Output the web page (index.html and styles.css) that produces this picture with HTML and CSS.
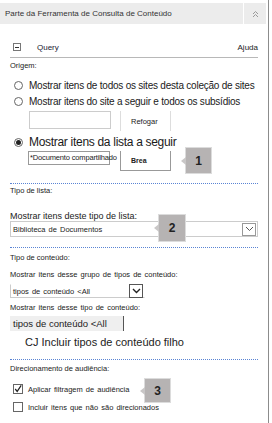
FILE: index.html
```html
<!DOCTYPE html>
<html lang="pt">
<head>
<meta charset="utf-8">
<link rel="stylesheet" href="styles.css">
</head>
<body>
<div class="panel">
  <div class="header">
    <div class="header-title">Parte da Ferramenta de Consulta de Conteúdo</div>
    <div class="header-toggle">
      <svg width="7" height="8" viewBox="0 0 7 8"><path d="M1 4 L3.5 1.5 L6 4 M1 7 L3.5 4.5 L6 7" fill="none" stroke="#9a9a9a" stroke-width="1"/></svg>
    </div>
  </div>

  <div class="content">
    <div class="query-row">
      <span class="collapse-box"><span class="minus"></span></span>
      <span class="query-label">Query</span>
      <span class="help">Ajuda</span>
    </div>

    <div class="section">
      <div class="section-title t1">Origem:</div>
      <label class="radio-row big first"><span class="radio"></span>Mostrar itens de todos os sites desta coleção de sites</label>
      <label class="radio-row big"><span class="radio"></span>Mostrar itens do site a seguir e todos os subsídios</label>
      <div class="input-row">
        <span class="text-input"></span>
        <span class="button">Refogar</span>
      </div>
      <label class="radio-row bigger"><span class="radio checked"></span>Mostrar itens da lista a seguir</label>
      <div class="input-row list-row">
        <span class="text-input small-input">*Documento compartilhado</span>
        <span class="button browse">Brea</span>
        <span class="badge badge-1">1</span>
      </div>
    </div>

    <div class="divider d1"></div>

    <div class="section">
      <div class="section-title t2">Tipo de lista:</div>
      <div class="field-label">Mostrar itens deste tipo de lista:</div>
      <div class="select wide">
        <span class="select-text">Biblioteca de Documentos</span>
        <span class="select-btn"><svg width="9" height="6" viewBox="0 0 9 6"><path d="M1 1 L4.5 4.5 L8 1" fill="none" stroke="#555" stroke-width="1"/></svg></span>
        <span class="badge badge-2">2</span>
      </div>
    </div>

    <div class="divider d2"></div>

    <div class="section">
      <div class="section-title t3">Tipo de conteúdo:</div>
      <div class="field-label small">Mostrar itens desse grupo de tipos de conteúdo:</div>
      <div class="select narrow">
        <span class="select-text">tipos de conteúdo &lt;All</span>
        <span class="select-btn dark"><svg width="9" height="6" viewBox="0 0 9 6"><path d="M1 1 L4.5 4.5 L8 1" fill="none" stroke="#222" stroke-width="1.4"/></svg></span>
      </div>
      <div class="field-label small second">Mostrar itens desse tipo de conteúdo:</div>
      <div class="ct-box">tipos de conteúdo &lt;All</div>
      <div class="include-child">CJ Incluir tipos de conteúdo filho</div>
    </div>

    <div class="divider d3"></div>

    <div class="section">
      <div class="section-title t4">Direcionamento de audiência:</div>
      <label class="check-row first"><span class="checkbox"><svg width="10" height="10" viewBox="0 0 10 10"><path d="M1.5 5 L4 8 L9 0.5" fill="none" stroke="#222" stroke-width="1.5"/></svg></span>Aplicar filtragem de audiência<span class="badge badge-3">3</span></label>
      <label class="check-row second"><span class="checkbox"></span>Incluir itens que não são direcionados</label>
    </div>
  </div>
</div>
</body>
</html>
```
FILE: styles.css
```css
* { box-sizing: border-box; }
html, body { margin: 0; padding: 0; background: #fff; }
body {
  font-family: "Liberation Sans", Arial, sans-serif;
  color: #222;
  width: 272px;
  height: 423px;
  overflow: hidden;
}
.panel {
  width: 269px;
  height: 423px;
  border-right: 1px solid #8c8c8c;
  padding-top: 3px;
}
.header {
  display: flex;
  align-items: stretch;
  height: 21px;
  margin-right: 2px;
  background: #ececec;
}
.header-title {
  flex: 1;
  display: flex;
  align-items: center;
  padding-left: 5px;
  font-size: 8px;
  word-spacing: 0;
  color: #333;
}
.header-toggle {
  width: 23px;
  border-left: 1px solid #fff;
  display: flex;
  align-items: center;
  justify-content: center;
}
.content {
  padding: 0 10px 0 10px;
}
.query-row {
  display: flex;
  align-items: center;
  margin-top: 15px;
  border-bottom: 1px solid #b8b8b8;
  padding-bottom: 2px;
  height: 19px;
  font-size: 8px;
}
.collapse-box {
  width: 8px;
  height: 8px;
  border: 1px solid #777;
  margin-left: 3px;
  display: flex;
  align-items: center;
  justify-content: center;
}
.minus { width: 4px; height: 1px; background: #333; }
.query-label { margin-left: 16px; color: #223; flex: 1; }
.help { color: #222; }
.section { position: relative; }
.section-title {
  font-size: 7.5px;
  color: #222;
  height: 10px;
  line-height: 10px;
}
.t1 { margin-top: 3px; }
.t2 { margin-top: 2px; }
.t3 { margin-top: 5px; }
.t4 { margin-top: 4px; }
.radio-row {
  display: flex;
  align-items: center;
  font-size: 10px;
  letter-spacing: -0.22px;
  white-space: nowrap;
  color: #1a1a1a;
  height: 16px;
}
.radio-row.first { margin-top: 6px; }
.radio-row.bigger { font-size: 12px; letter-spacing: -0.3px; margin-top: 3px; height: 16px; }
.radio {
  width: 9px;
  height: 9px;
  border: 1px solid #666;
  border-radius: 50%;
  margin: 0 6px 0 4px;
  flex: none;
  display: flex;
  align-items: center;
  justify-content: center;
}
.radio.checked::after {
  content: "";
  width: 5px;
  height: 5px;
  border-radius: 50%;
  background: #222;
}
.input-row {
  display: flex;
  align-items: flex-start;
  padding-left: 19px;
  margin-top: 2px;
  height: 20px;
  position: relative;
}
.text-input {
  width: 82px;
  height: 18px;
  border: 1px solid #ccc;
}
.button {
  margin-left: 9px;
  width: 51px;
  height: 20px;
  border-left: 1px solid #ddd;
  border-right: 1px solid #ddd;
  font-size: 7.5px;
  display: flex;
  align-items: center;
  padding-left: 10px;
}
.list-row { margin-top: 1px; height: 21px; }
.small-input {
  height: 14px;
  border: 1px solid #999;
  font-size: 7.5px;
  letter-spacing: -0.15px;
  padding-left: 1px;
  line-height: 11px;
  white-space: nowrap;
  overflow: visible;
  margin-left: -1px;
  position: relative;
  z-index: 1;
}
.button.browse {
  height: 20px;
  border: 1px solid #999;
  border-top: none;
  padding-left: 10px;
  font-size: 7px;
  font-weight: bold;
  margin-left: 10px;
}
.badge {
  position: absolute;
  width: 27px;
  height: 27px;
  background: #b6b3b3;
  border: 1px solid #dcdcdc;
  display: flex;
  align-items: center;
  justify-content: center;
  font-size: 12px;
  font-weight: bold;
  color: #222;
  letter-spacing: 0;
  word-spacing: 0;
}
.badge::before {
  content: "";
  position: absolute;
  left: -5px;
  top: 50%;
  margin-top: -4px;
  border-right: 5px solid #c9c7c7;
  border-top: 4px solid transparent;
  border-bottom: 4px solid transparent;
}
.badge-1 { left: 175px; top: -4px; }
.divider {
  border-top: 1px dotted #5a84d4;
}
.d1 { margin-top: 11px; }
.d2 { margin-top: 10px; }
.d3 { margin-top: 10px; }
.field-label {
  font-size: 9px;
  color: #222;
  margin-top: 15px;
  line-height: 10px;
}
.field-label.small { font-size: 7.5px; margin-top: 7px; word-spacing: 1px; }
.field-label.second { margin-top: 5px; }
.select {
  display: flex;
  align-items: center;
  border: 1px solid #ccc;
  height: 16px;
  position: relative;
}
.select-text {
  flex: 1;
  font-size: 7.5px;
  padding-left: 2px;
  word-spacing: 1px;
}
.select-btn {
  width: 14px;
  height: 13px;
  border: 1px solid #999;
  margin-right: 1px;
  display: flex;
  align-items: center;
  justify-content: center;
}
.select-btn.dark { border-color: #555; height: 14px; }
.select.wide { width: 248px; }
.badge-2 { left: 147px; top: -8px; width: 28px; height: 28px; }
.select.narrow { width: 135px; margin-top: 4px; height: 14px; border-color: #fff #fff #ccc #ccc; }
.ct-box {
  margin-top: 3px;
  width: 114px;
  height: 15px;
  background: #efefef;
  border-right: 1px solid #555;
  font-size: 9.5px;
  padding-left: 3px;
  line-height: 15px;
}
.include-child {
  margin-top: 5px;
  padding-left: 15px;
  font-size: 11px;
  height: 13px;
  line-height: 13px;
}
.check-row {
  display: flex;
  align-items: center;
  font-size: 7.5px;
  word-spacing: 1px;
  height: 14px;
  position: relative;
}
.check-row.first { margin-top: 8px; }
.check-row.second { margin-top: 4px; }
.checkbox {
  width: 10px;
  height: 10px;
  border: 1px solid #666;
  margin: 0 5px 0 3px;
  display: flex;
  align-items: center;
  justify-content: center;
  flex: none;
}
.badge-3 { left: 134px; top: -4px; height: 25px; }
```
